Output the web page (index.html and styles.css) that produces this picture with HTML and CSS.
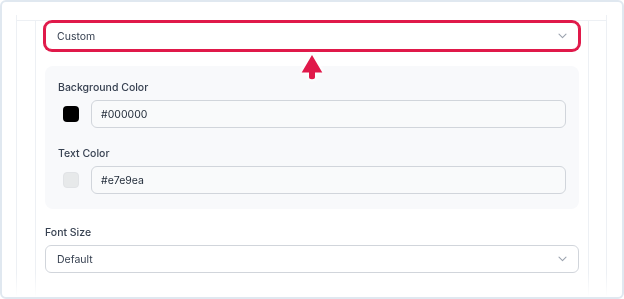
FILE: index.html
```html
<!DOCTYPE html>
<html lang="en">
<head>
    <meta charset="UTF-8">
    <meta name="viewport" content="width=device-width, initial-scale=1.0">
    <title>Theme Colors</title>
    <link rel="stylesheet" href="styles.css">
</head>
<body>
    <div class="frame">
        <div class="outer">
            <div class="outer-head"></div>
            <div class="inner">
                <div class="select select-active">
                    <span>Custom</span>
                    <svg class="chevron" width="9" height="6" viewBox="0 0 9 6"><path d="M1 1.2 L4.5 4.6 L8 1.2" fill="none" stroke="#9ca3af" stroke-width="1.1" stroke-linecap="round" stroke-linejoin="round"/></svg>
                </div>

                <svg class="pointer" width="26" height="30" viewBox="0 0 26 30">
                    <path d="M13 3 L23.3 20.5 L16 20.5 L16 25 Q16 27.2 13 27.2 Q10 27.2 10 25 L10 20.5 L2.7 20.5 Z" fill="#e0194a"/>
                </svg>

                <div class="color-panel">
                    <div class="field-label">Background Color</div>
                    <div class="color-row">
                        <span class="swatch swatch-black"></span>
                        <div class="text-input">#000000</div>
                    </div>
                    <div class="field-label second">Text Color</div>
                    <div class="color-row">
                        <span class="swatch swatch-light"></span>
                        <div class="text-input">#e7e9ea</div>
                    </div>
                </div>

                <div class="field-label size-label">Font Size</div>
                <div class="select">
                    <span>Default</span>
                    <svg class="chevron" width="9" height="6" viewBox="0 0 9 6"><path d="M1 1.2 L4.5 4.6 L8 1.2" fill="none" stroke="#9ca3af" stroke-width="1.1" stroke-linecap="round" stroke-linejoin="round"/></svg>
                </div>
            </div>
        </div>
    </div>
</body>
</html>
```

FILE: styles.css
```css
body {
    margin: 0;
    font-family: Inter, "Noto Sans", sans-serif;
    background-color: #fff;
}

.frame {
    height: 299px;
    box-sizing: border-box;
    border: 2px solid #e0e8f0;
    border-radius: 6px;
    display: flex;
    flex-direction: column;
    overflow: hidden;
}

.outer {
    flex: 1;
    margin: 13px 15px 0 14px;
    border-left: 1px solid #edf0f4;
    border-right: 1px solid #edf0f4;
    -webkit-mask-image: linear-gradient(to bottom, #000 calc(100% - 24px), transparent);
    mask-image: linear-gradient(to bottom, #000 calc(100% - 24px), transparent);
}

.outer-head {
    height: 5px;
    border-bottom: 1px solid #edf0f4;
}

.inner {
    position: relative;
    height: 100%;
    margin: 0 17px 0 18px;
    padding: 1px 9px 0;
    border-left: 1px solid #edf0f4;
    border-right: 1px solid #edf0f4;
}

.select {
    height: 28px;
    box-sizing: border-box;
    display: flex;
    align-items: center;
    justify-content: space-between;
    padding: 0 11px 0 11px;
    background-color: #fff;
    border: 1px solid #d1d5db;
    border-radius: 6px;
    font-size: 10.5px;
    color: #374151;
}

.select-active {
    border-color: #e0194a;
    box-shadow: 0 0 0 2px #e0194a;
    border-radius: 7px;
}

.chevron {
    display: block;
}

.pointer {
    position: absolute;
    top: 31px;
    left: 50%;
    margin-left: -13px;
    filter: drop-shadow(0 0 2px #fff) drop-shadow(0 0 2px #fff);
}

.color-panel {
    margin-top: 16px;
    padding: 14px 13px 15px;
    background-color: #f8f9fb;
    border-radius: 8px;
}

.field-label {
    height: 16px;
    line-height: 16px;
    font-size: 10.5px;
    font-weight: 500;
    color: #374151;
    margin-bottom: 4px;
}

.field-label.second {
    margin-top: 18px;
}

.size-label {
    margin-top: 16px;
}

.color-row {
    display: flex;
    align-items: center;
}

.swatch {
    width: 16px;
    height: 16px;
    margin: 0 12px 0 5px;
    border-radius: 4px;
    box-sizing: border-box;
}

.swatch-black {
    background-color: #000;
}

.swatch-light {
    background-color: #e7e9ea;
    border: 1px solid #e1e3e6;
}

.text-input {
    flex: 1;
    height: 28px;
    box-sizing: border-box;
    display: flex;
    align-items: center;
    padding-left: 9px;
    border: 1px solid #d1d5db;
    border-radius: 6px;
    background-color: #f9fafb;
    font-size: 10.5px;
    color: #1f2937;
}
```
